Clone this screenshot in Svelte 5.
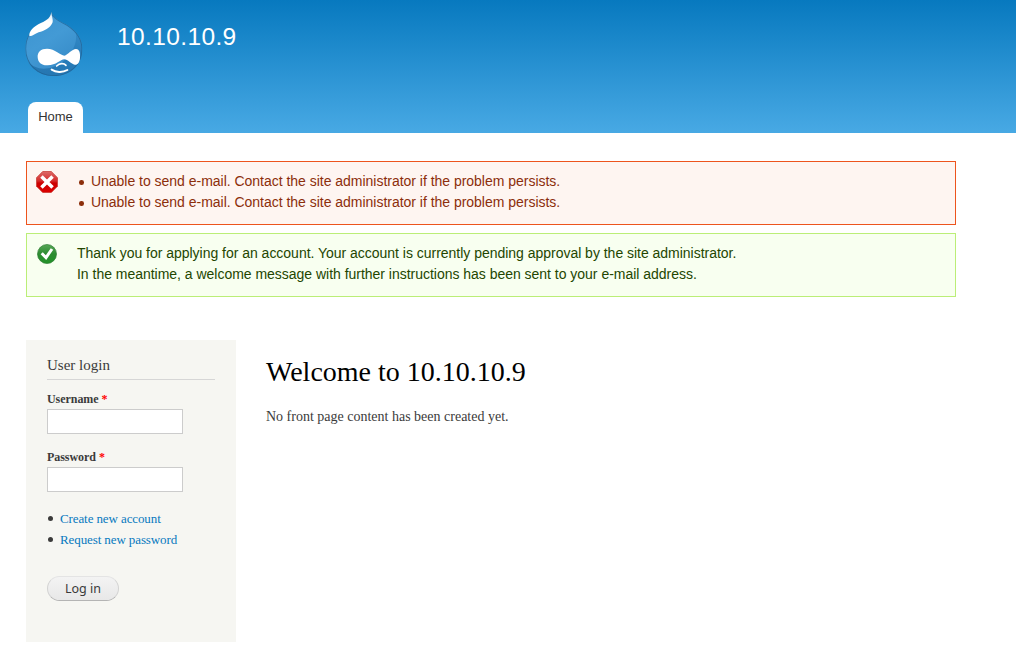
<script>
  const errors = [1, 2].map(() => 'Unable to send e-mail. Contact the site administrator if the problem persists.');
  const links = ['Create new account', 'Request new password'];
  const fields = [
    { id: 'name', label: 'Username', type: 'text' },
    { id: 'pass', label: 'Password', type: 'password' }
  ];
</script>

<header>
  <div class="brand">
    <svg class="logo" viewBox="30 18 174 198" aria-hidden="true">
      <defs>
        <linearGradient id="drop" x1="0" y1="0" x2=".6" y2="1">
          <stop offset="0" stop-color="#3a92cf" />
          <stop offset=".5" stop-color="#439ad5" />
          <stop offset="1" stop-color="#3589c6" />
        </linearGradient>
        <linearGradient id="shade" x1="1" y1="0" x2=".3" y2="1">
          <stop offset="0" stop-color="#3187c4" />
          <stop offset=".4" stop-color="#2277b5" />
          <stop offset="1" stop-color="#1f6fa9" />
        </linearGradient>
        <linearGradient id="shine" x1=".7" y1="0" x2=".45" y2="1">
          <stop offset="0" stop-color="#d9edf9" />
          <stop offset=".35" stop-color="#fff" />
          <stop offset="1" stop-color="#fff" />
        </linearGradient>
        <clipPath id="body"><path d="M109 20C114 40 136 48 158 61C187 80 202 104 202 132C202 181 165 213 116 213C66 213 31 177 31 132C31 98 46 74 69 60C90 47 106 42 109 20Z" /></clipPath>
      </defs>
      <g clip-path="url(#body)">
        <rect x="28" y="18" width="178" height="198" fill="url(#drop)" />
        <path d="M182 82C190 122 160 170 112 187C80 197 56 188 40 172V216H206V82Z" fill="url(#shade)" opacity=".75" />
        <path d="M109 20C106 42 90 47 69 60C46 74 31 98 31 132C31 177 66 213 116 213C165 213 202 181 202 132C202 104 187 80 158 61C136 48 114 40 109 20Z" fill="none" stroke="#1f6496" stroke-opacity=".8" stroke-width="5" />
      </g>
      <path d="M109 21C110 36 116 46 112 54C105 70 88 77 71 82C57 87 48 97 43 92C42 80 54 67 70 58C91 47 106 43 109 21Z" fill="url(#shine)" />
      <path d="M68 157C67 140 78 131 96 131C120 131 137 151 148 152C159 150 170 132 183 132C194 132 196 146 195 158C194 173 188 180 179 179C169 178 158 163 148 163C136 164 124 181 98 181C80 182 69 173 68 157Z" fill="#fff" />
      <path d="M125 183C134 174 147 174 153 181" fill="none" stroke="#fff" stroke-width="5" stroke-linecap="round" />
      <path d="M110 194C122 202 142 204 157 195" fill="none" stroke="#fff" stroke-width="6" stroke-linecap="round" />
    </svg>
    <span class="site">10.10.10.9</span>
  </div>
  <nav><a href="#home">Home</a></nav>
</header>

<section class="messages error">
  <svg class="icon" viewBox="0 0 24 24" aria-hidden="true">
    <defs><linearGradient id="red" x1="0" y1="0" x2="0" y2="1">
      <stop offset="0" stop-color="#dc6a68" /><stop offset=".45" stop-color="#d52a2a" /><stop offset=".55" stop-color="#cc0000" /><stop offset="1" stop-color="#dc0000" />
    </linearGradient></defs>
    <path d="M7.7 1.5H16.3L22.5 7.7V16.3L16.3 22.5H7.7L1.5 16.3V7.7Z" fill="url(#red)" stroke="#c4342c" stroke-width=".7" />
    <path d="M7.7 7.7L16.3 16.3M16.3 7.7L7.7 16.3" stroke="#fff" stroke-width="3.5" stroke-linecap="square" />
  </svg>
  <ul>
    {#each errors as message}<li>{message}</li>{/each}
  </ul>
</section>

<section class="messages status">
  <svg class="icon" viewBox="0 0 24 24" aria-hidden="true">
    <defs><linearGradient id="green" x1="0" y1="0" x2="0" y2="1">
      <stop offset="0" stop-color="#57a657" /><stop offset=".5" stop-color="#2c8b30" /><stop offset="1" stop-color="#239329" />
    </linearGradient></defs>
    <circle cx="12" cy="12" r="9.5" fill="url(#green)" stroke="#2c7d32" stroke-width=".7" />
    <path d="M6.7 11.2L11 15.6L17 7" fill="none" stroke="#fff" stroke-width="3" />
  </svg>
  <p>Thank you for applying for an account. Your account is currently pending approval by the site administrator.<br />In the meantime, a welcome message with further instructions has been sent to your e-mail address.</p>
</section>

<div class="columns">
  <aside>
    <h2>User login</h2>
    <form>
      {#each fields as field}
        <div class="field">
          <label for={field.id}>{field.label} <b>*</b></label>
          <input id={field.id} type={field.type} />
        </div>
      {/each}
      <ul class="links">
        {#each links as link}<li><a href="#user">{link}</a></li>{/each}
      </ul>
      <button type="button">Log in</button>
    </form>
  </aside>
  <main>
    <h1>Welcome to 10.10.10.9</h1>
    <p>No front page content has been created yet.</p>
  </main>
</div>

<style>
  :global(body) { background: #fff; color: #3b3b3b; font-family: "Liberation Serif", serif; overflow: hidden; }
  * { box-sizing: border-box; }
  h1, h2, p, ul { margin: 0; padding: 0; font-weight: normal; }
  a { text-decoration: none; }
  header {
    height: 133px; padding: 11px 25px 0; display: flex; flex-direction: column; justify-content: space-between;
    align-items: flex-start; background: linear-gradient(#0779bf, #48a9e4); font-family: "Liberation Sans", sans-serif;
  }
  .brand { display: flex; gap: 34px; }
  .logo { width: 58px; height: 66px; }
  .site { color: #fff; font-size: 24.5px; line-height: 30px; margin-top: 11px; letter-spacing: .38px; }
  nav { margin-left: 3px; }
  nav a { display: block; width: 55px; height: 31px; border-radius: 8px 8px 0 0; background: #fff; color: #333; font-size: 13px; line-height: 29px; text-align: center; }
  .messages {
    display: flex; width: 930px; height: 64px; margin: 28px 0 0 26px; padding: 9px 0 0 8px; border: 1px solid;
    font-family: "Liberation Sans", sans-serif; font-size: 14px; line-height: 21px; letter-spacing: -.02px;
  }
  .error { background: #fef5f1; border-color: #ed541d; color: #8c2e0b; }
  .status { margin-top: 8px; background: #f8fff0; border-color: #be7; color: #234600; }
  .icon { flex: none; width: 24px; height: 24px; margin: -1px 18px 0 0; }
  .error ul { list-style: none; }
  .error li { display: flex; align-items: center; }
  .error li::before { content: ""; width: 4.6px; height: 4.6px; margin: 2px 7.2px 0 2.2px; border-radius: 50%; background: currentColor; }
  .columns { display: flex; gap: 30px; margin: 43px 0 0 26px; }
  aside { width: 210px; height: 302px; padding: 15px 21px; background: #f6f6f2; }
  h2 { height: 25px; border-bottom: 1px solid #d6d6d6; font-size: 15px; line-height: 21px; }
  .field { height: 58px; padding-top: 11px; }
  form { display: block; }
  label { display: block; height: 18px; font-size: 12px; letter-spacing: -.05px; line-height: 17px; font-weight: bold; }
  label b { color: #f00; }
  input { display: block; width: 136px; height: 25px; border: 1px solid #ccc; background: #fff; padding: 2px; }
  .links { list-style: none; margin-top: 12px; font-size: 13px; letter-spacing: -.1px; line-height: 21px; }
  .links li { display: flex; align-items: center; }
  .links li::before { content: ""; width: 5px; height: 5px; margin: 0 6.8px 0 1.2px; border-radius: 50%; background: #3b3b3b; }
  .links a { color: #0779bf; }
  button {
    display: block; width: 72px; height: 25px; margin-top: 26px; padding: 0; border: 1px solid #ccc; border-color: #e4e4e4 #d2d2d2 #b4b4b4; border-radius: 13px;
    background: linear-gradient(#f3f3f3, #e8e8e8); color: #3a3a3a; font: 12.5px/22px "Noto Sans", sans-serif;
  }
  main { padding-top: 15px; }
  h1 { color: #000; font-size: 28px; line-height: 34px; }
  main p { margin-top: 17px; font-size: 14px; line-height: 21px; }
</style>
